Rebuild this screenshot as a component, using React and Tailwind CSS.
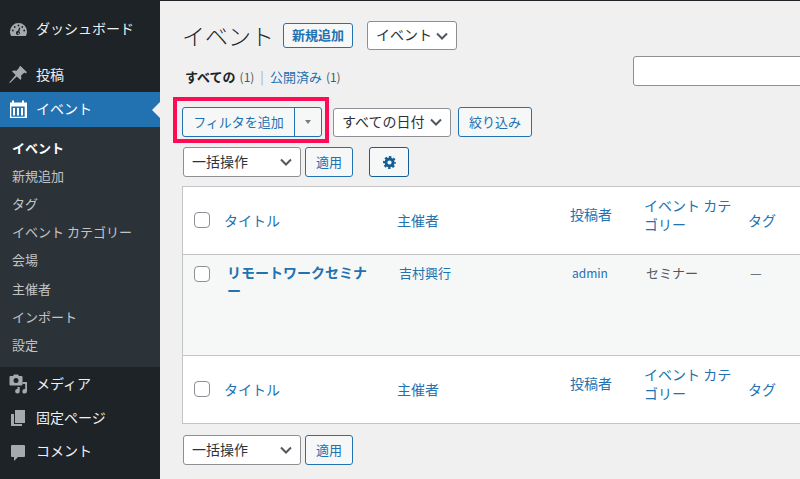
const font = { fontFamily: '"Noto Sans CJK JP","Noto Sans",sans-serif' };

const Chevron = () => (
  <svg width="12" height="8" viewBox="0 0 12 8">
    <path d="M1 1.500 L6 6.500 L11 1.500" fill="none" stroke="#50575e" strokeWidth="2" />
  </svg>
);

const Gauge = () => (
  <svg width="20" height="20" viewBox="0 0 20 20">
    <path fill="#a7aaad" fillRule="evenodd" d="M9.500 4a8.500 8.500 0 0 1 8.500 8.500c0 1.700-.4 3.200-1.200 4.500H2.200A8.500 8.500 0 0 1 1 12.500 8.500 8.500 0 0 1 9.500 4Z" />
    <g fill="#1d2327">
      <circle cx="9.500" cy="6.500" r=".9" />
      <circle cx="5.700" cy="8" r=".9" />
      <circle cx="13.300" cy="8" r=".9" />
      <circle cx="3.800" cy="11.500" r=".9" />
      <circle cx="15.200" cy="11.500" r=".9" />
      <path d="M10.300 8.500 11.400 9 10.300 12.600a1.900 1.900 0 1 1-1.500-.6Z" />
    </g>
    <circle cx="9.400" cy="14.300" r=".7" fill="#a7aaad" />
  </svg>
);
const Pin = () => (
  <svg width="20" height="20" viewBox="0 0 20 20">
    <path fill="#a7aaad" d="M11.500 1 18 7.200l-1.600 1.200-1-.8-3.400 3.200c.6 1.600.4 3-.4 4.200L7.800 11.400 1 18l-.8-.4L6.600 10 2.900 6.300c1.200-.9 2.800-1.100 4.300-.4L10.400 2.600l-.6-.6Z" />
  </svg>
);
const Calendar = () => (
  <svg width="18" height="20" viewBox="0 0 18 20">
    <path fill="#fff" fillRule="evenodd" d="M3 .5h2v2h8v-2h2v2h3v15.500H1V2.500h2Zm-.7 6v10.200h13.400V6.500ZM4 8h2v7.500H4Zm4 0h2v7.500H8Zm4 0h2v7.500h-2Z" />
  </svg>
);
const Media = () => (
  <svg width="20" height="20" viewBox="0 0 20 20">
    <path fill="#a7aaad" fillRule="evenodd" d="M1.500 2H4l1-1.500h4L10 2h2.500a1 1 0 0 1 1 1v7.500a1 1 0 0 1-1 1h-11a1 1 0 0 1-1-1V3a1 1 0 0 1 1-1Zm5.500 2a2.500 2.500 0 1 0 0 5 2.500 2.500 0 0 0 0-5Z" />
    <path fill="#a7aaad" d="M13.500 8H18v9.200a2.300 2.300 0 1 1-1.800-2.200V10h-2.700ZM8.500 13h2.200v4.200A2.300 2.300 0 1 1 8.500 15Z" />
  </svg>
);
const Pages = () => (
  <svg width="20" height="20" viewBox="0 0 20 20">
    <path fill="#a7aaad" d="M6 2h10v13H6ZM2 6h3v10h8v2H2Z" />
  </svg>
);
const Comment = () => (
  <svg width="20" height="20" viewBox="0 0 20 20">
    <path fill="#a7aaad" d="M3 3h12a1 1 0 0 1 1 1v10a1 1 0 0 1-1 1H9l-4 4v-4H3a1 1 0 0 1-1-1V4a1 1 0 0 1 1-1Z" />
  </svg>
);
const Gear = () => (
  <svg width="13" height="13" viewBox="0 0 20 20">
    <circle cx="10" cy="10" r="5.500" fill="none" stroke="#135e96" strokeWidth="4.500" />
    <circle cx="10" cy="10" r="8.500" fill="none" stroke="#135e96" strokeWidth="3" strokeDasharray="3.700 2.975" strokeDashoffset="1.850" />
  </svg>
);

const MenuItem = ({ icon, label, h, cls = "" }) => (
  <div className={`flex items-center text-[14px] text-[#f0f0f1] ${h} ${cls}`}>
    <span className="w-[36px] pl-[9px] flex items-center shrink-0">{icon}</span>
    <span className="pb-[2px]">{label}</span>
  </div>
);

const Check = () => (
  <span className="block w-[16px] h-[16px] rounded-[4px] bg-white border border-[#8c8f94]" />
);

const Select = ({ w, h = "h-[30px]", label }) => (
  <div className={`${w} ${h} pl-[8px] pr-[8px] flex items-center justify-between bg-white border border-[#8c8f94] rounded-[3px] text-[14px] text-[#2c3338] shrink-0`}>
    <span className="pb-[2px]">{label}</span>
    <Chevron />
  </div>
);

const Btn = ({ w, label }) => (
  <div className={`${w} h-[30px] pb-[1px] flex items-center justify-center bg-[#f6f7f7] border border-[#2271b1] rounded-[3px] text-[13px] text-[#2271b1] shrink-0`}>
    {label}
  </div>
);

const HeadRow = ({ h }) => (
  <tr className={`${h} bg-white`}>
    <td className="p-0 pl-[11px]"><Check /></td>
    <td className="pl-[8px] text-[14px] text-[#2271b1]">タイトル</td>
    <td className="pl-[8px] text-[14px] text-[#2271b1]">主催者</td>
    <td className="pl-[8px] text-[14px] text-[#2271b1] align-middle pb-[12px]">投稿者</td>
    <td className="pl-[8px] pr-[4px] text-[14px] leading-[19px] text-[#2271b1] pb-[10px]">イベント カテゴリー</td>
    <td className="pl-[8px] text-[14px] text-[#2271b1]">タグ</td>
  </tr>
);

export default function App() {
  return (
    <div style={font} className="relative w-[800px] h-[479px] overflow-hidden flex bg-[#f0f0f1]">
      <aside className="w-[160px] shrink-0 bg-[#1d2327] pt-[12px]">
        <MenuItem icon={<Gauge />} label="ダッシュボード" h="h-[34px]" cls="mb-[12px]" />
        <MenuItem icon={<Pin />} label="投稿" h="h-[34px]" />
        <div className="relative">
          <MenuItem icon={<Calendar />} label="イベント" h="h-[35px]" cls="bg-[#2271b1] text-white" />
          <span className="absolute right-0 top-[10px] w-0 h-0 border-y-[8px] border-y-transparent border-r-[8px] border-r-[#f0f0f1]" />
        </div>
        <div className="bg-[#2c3338] pt-[6.500px] pb-[8.500px] text-[13px] text-[#c3c4c7]">
          <div className="h-[28px] pl-[12px] flex items-center font-bold text-white">イベント</div>
          {["新規追加", "タグ", "イベント カテゴリー", "会場", "主催者", "インポート", "設定"].map((t) => (
            <div key={t} className="h-[28.200px] pl-[12px] flex items-center">{t}</div>
          ))}
        </div>
        <MenuItem icon={<Media />} label="メディア" h="h-[34px]" />
        <MenuItem icon={<Pages />} label="固定ページ" h="h-[34px]" />
        <MenuItem icon={<Comment />} label="コメント" h="h-[33px]" />
      </aside>

      <main className="flex-1 min-w-0 pl-[23px] pt-[21px] relative border-t border-t-[#1d2327]">
        <div className="flex items-center h-[29px] -mt-[1px]">
          <h1 className="text-[23px] font-light text-[#1d2327] leading-none w-[101px] -ml-[1px]">イベント</h1>
          <div className="w-[70px] h-[25px] mt-[-1px] flex items-center justify-center bg-[#f6f7f7] border border-[#2271b1] rounded-[3px] text-[13px] font-bold text-[#2271b1]">新規追加</div>
          <Select w="w-[90px] ml-[14px]" h="h-[29px]" label="イベント" />
        </div>

        <div className="flex items-start">
          <div className="mt-[17px] pl-[2px] flex items-center h-[20px] text-[13px] text-[#50575e] whitespace-nowrap">
            <b className="text-[#1d2327]">すべての</b>
            <span className="ml-[4px] text-[12px]">(1)</span>
            <span className="mx-[6px] text-[#a7aaad]">|</span>
            <span className="text-[#2271b1]">公開済み</span>
            <span className="ml-[4px] text-[12px] text-[#50575e]">(1)</span>
          </div>
          <div className="ml-auto mt-[6px] w-[170px] h-[30px] shrink-0 bg-white border border-[#8c8f94] rounded-[3px] translate-x-[3px]" />
        </div>

        <div className="flex items-center gap-[7px] mt-[20px] h-[30px]">
          <div className="flex w-[140px] h-[30px] -ml-[1px] border border-[#2271b1] rounded-[3px] bg-[#f6f7f7] text-[13px] text-[#2271b1] shrink-0">
            <span className="w-[112px] border-r border-r-[#2271b1] flex items-center justify-center">フィルタを追加</span>
            <span className="flex-1 flex items-center justify-center">
              <span className="w-0 h-0 border-x-[3px] border-x-transparent border-t-[4px] border-t-[#787c82]" />
            </span>
          </div>
          <Select w="w-[118px] ml-[4px]" h="h-[29px]" label="すべての日付" />
          <Btn w="w-[74px] h-[29px]" label="絞り込み" />
        </div>

        <div className="flex items-center mt-[10px] h-[30px]">
          <Select w="w-[118px]" label="一括操作" />
          <div className="ml-[4px]"><Btn w="w-[48px]" label="適用" /></div>
          <div className="ml-[16px] w-[40px] h-[30px] flex items-center justify-center bg-[#f6f7f7] border border-[#135e96] rounded-[3px]"><Gear /></div>
        </div>

        <div className="mt-[9px] -ml-[1px] w-[700px] border border-[#c3c4c7] bg-white">
          <table className="w-[700px] table-fixed border-collapse">
            <colgroup>
              <col className="w-[33px]" />
              <col className="w-[173px]" />
              <col className="w-[173px]" />
              <col className="w-[74px]" />
              <col className="w-[104px]" />
              <col />
            </colgroup>
            <thead><HeadRow h="h-[67px]" /></thead>
            <tbody>
              <tr className="h-[101px] bg-[#f6f7f7] border-y border-y-[#c3c4c7] align-top text-[13px]">
                <td className="pl-[11px] pt-[11px]"><Check /></td>
                <td className="pl-[11px] pr-[20px] pt-[8px] text-[14px] leading-[18px] font-bold text-[#2271b1]">リモートワークセミナー</td>
                <td className="pl-[10px] pt-[8px] text-[#2271b1]">吉村興行</td>
                <td className="pl-[10px] pt-[9px] text-[12px] text-[#2271b1]">admin</td>
                <td className="pl-[10px] pt-[8px] text-[#50575e]">セミナー</td>
                <td className="pl-[10px] pt-[8px] text-[#50575e]">—</td>
              </tr>
            </tbody>
            <tfoot><HeadRow h="h-[68px]" /></tfoot>
          </table>
        </div>

        <div className="flex items-center mt-[11px]">
          <Select w="w-[118px]" label="一括操作" />
          <div className="ml-[4px]"><Btn w="w-[48px]" label="適用" /></div>
        </div>

        <div className="absolute left-[659px] top-[1px] w-[30px] h-[30px] bg-white border border-[#8c8f94] rounded-[3px]" />
      </main>

      <div className="absolute left-[173px] top-[97px] w-[156px] h-[46px] border-[4px] border-[#ff0a54] pointer-events-none" />
    </div>
  );
}
